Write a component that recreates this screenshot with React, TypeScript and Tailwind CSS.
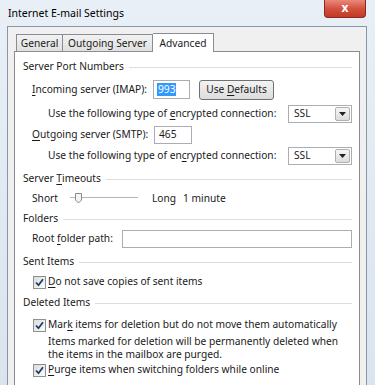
import React from "react";

const font = { fontFamily: '"Noto Sans", "Open Sans", sans-serif' };

function U({ children }: { children: React.ReactNode }) {
  return <span className="underline underline-offset-[2px]">{children}</span>;
}

function GroupHeader({ title, className = "" }: { title: React.ReactNode; className?: string }) {
  return (
    <div className={`flex items-center h-[16px] ${className}`}>
      <span className="whitespace-nowrap">{title}</span>
      <div className="flex-1 ml-[5px] h-px bg-[#d5dfe5]" />
    </div>
  );
}

function Check() {
  return (
    <span className="w-[13px] h-[13px] border border-[#8e8f8f] bg-gradient-to-br from-[#dcdcdc] to-[#fbfbfb] flex items-center justify-center shrink-0">
      <svg width="9" height="9" viewBox="0 0 9 9">
        <path d="M1 4.5 L3.5 7.2 L8 1.2" stroke="#1d3c6e" strokeWidth="1.8" fill="none" />
      </svg>
    </span>
  );
}

function SslSelect() {
  return (
    <div className="w-[64px] h-[18px] border border-[#abadb3] bg-white flex items-center shrink-0">
      <span className="flex-1 pl-[5px]">SSL</span>
      <span className="w-[15px] h-[14px] mr-[1px] border border-[#b0b0b0] rounded-[2px] bg-gradient-to-b from-[#f6f6f6] to-[#dcdcdc] flex items-center justify-center">
        <svg width="7" height="4" viewBox="0 0 7 4">
          <path d="M0 0 H7 L3.5 4 Z" fill="#222" />
        </svg>
      </span>
    </div>
  );
}

export default function App() {
  return (
    <div
      className="w-[375px] h-[385px] overflow-hidden bg-gradient-to-b from-[#e9eff6] to-[#d9e4ef] flex flex-col text-[10.2px] text-[#1a1a1a] whitespace-nowrap"
      style={font}
    >
      {/* Title bar */}
      <div className="h-[26px] flex items-start shrink-0">
        <span className="pl-[8px] pt-[6px] text-[10.5px] text-black">Internet E-mail Settings</span>
        <div className="ml-auto mr-[9px] w-[42px] h-[18px] rounded-b-[4px] border border-t-0 border-[#8b2a1c] bg-gradient-to-b from-[#e8897a] via-[#d4523f] to-[#c03a27] flex items-center justify-center">
          <span className="text-white font-bold text-[12px] leading-none -mt-[1px]">x</span>
        </div>
      </div>

      {/* Dialog body */}
      <div className="flex-1 ml-[7px] mr-[8px] border-l border-r border-t border-[#8a96a3] bg-[#f0f0f0] px-[6px] pt-[6px]">
        {/* Tabs */}
        <div className="flex items-end h-[18px] pl-[2px]">
          <div className="h-[17px] w-[47px] border border-b-0 border-[#898c95] bg-gradient-to-b from-[#f2f2f2] to-[#e0e0e0] flex items-center justify-center pt-[1px]">
            General
          </div>
          <div className="h-[17px] w-[90px] border border-l-0 border-b-0 border-[#898c95] bg-gradient-to-b from-[#f2f2f2] to-[#e0e0e0] flex items-center justify-center pt-[1px]">
            Outgoing Server
          </div>
          <div className="h-[19px] w-[61px] -mb-px relative border border-l-0 border-b-0 border-[#898c95] bg-white flex items-start justify-center pt-[2px]">
            Advanced
          </div>
        </div>

        {/* Panel */}
        <div className="bg-white border border-[#898c95] h-[360px] pl-[8px] pr-[7px] pt-[7px]">
          <GroupHeader title="Server Port Numbers" />

          <div className="mt-[5px] h-[19px] flex items-center pl-[9px]">
            <span className="w-[121px]">
              <U>I</U>ncoming server (IMAP):
            </span>
            <div className="w-[37px] h-[19px] border border-[#abadb3] bg-white flex items-center pl-[3px]">
              <span className="bg-[#3399ff] text-white px-px leading-[13px]">993</span>
            </div>
            <button className="ml-[9px] w-[75px] h-[20px] rounded-[3px] border border-[#707070] bg-gradient-to-b from-[#f3f3f3] to-[#dcdcdc] leading-none">
              Use <U>D</U>efaults
            </button>
          </div>

          <div className="mt-[6px] h-[18px] flex items-center pl-[25px]">
            <span className="flex-1">
              Use the following type of <U>e</U>ncrypted connection:
            </span>
            <SslSelect />
          </div>

          <div className="mt-[3px] h-[18px] flex items-center pl-[9px]">
            <span className="w-[122px]">
              <U>O</U>utgoing server (SMTP):
            </span>
            <div className="w-[38px] h-[18px] border border-[#abadb3] bg-white flex items-center pl-[4px]">
              465
            </div>
          </div>

          <div className="mt-[3px] h-[18px] flex items-center pl-[25px]">
            <span className="flex-1">
              Use the following type of en<U>c</U>rypted connection:
            </span>
            <SslSelect />
          </div>

          <GroupHeader
            className="mt-[6px]"
            title={
              <>
                Server <U>T</U>imeouts
              </>
            }
          />

          <div className="mt-[4px] h-[16px] flex items-center pl-[9px]">
            <span className="w-[38px]">Short</span>
            <svg width="70" height="14" viewBox="0 0 70 14" className="shrink-0">
              <line x1="0" y1="5.5" x2="68" y2="5.5" stroke="#b5b5b5" strokeWidth="1" />
              <line x1="0" y1="6.5" x2="68" y2="6.5" stroke="#ffffff" strokeWidth="1" />
              <path d="M5.5 1.5 H11.5 V8 L8.5 11 L5.5 8 Z" fill="#f4f4f4" stroke="#8a8a8a" strokeWidth="1" />
            </svg>
            <span className="ml-[12px]">Long</span>
            <span className="ml-[7px]">1 minute</span>
          </div>

          <GroupHeader className="mt-[4px]" title="Folders" />

          <div className="mt-[3px] h-[18px] flex items-center pl-[9px]">
            <span className="w-[90px]">
              Root <U>f</U>older path:
            </span>
            <div className="flex-1 h-[18px] border border-[#abadb3] bg-white" />
          </div>

          <GroupHeader className="mt-[6px]" title="Sent Items" />

          <div className="mt-[4px] h-[16px] flex items-center pl-[10px] gap-[2px]">
            <Check />
            <span>
              <U>D</U>o not save copies of sent items
            </span>
          </div>

          <GroupHeader className="mt-[5px]" title="Deleted Items" />

          <div className="mt-[6px] h-[16px] flex items-center pl-[10px] gap-[2px]">
            <Check />
            <span>
              Mar<U>k</U> items for deletion but do not move them automatically
            </span>
          </div>

          <p className="mt-[2px] pl-[25px] leading-[13px]">
            Items marked for deletion will be permanently deleted when
            <br />
            the items in the mailbox are purged.
          </p>

          <div className="mt-[1px] h-[16px] flex items-center pl-[10px] gap-[2px]">
            <Check />
            <span>
              <U>P</U>urge items when switching folders while online
            </span>
          </div>
        </div>
      </div>
    </div>
  );
}
